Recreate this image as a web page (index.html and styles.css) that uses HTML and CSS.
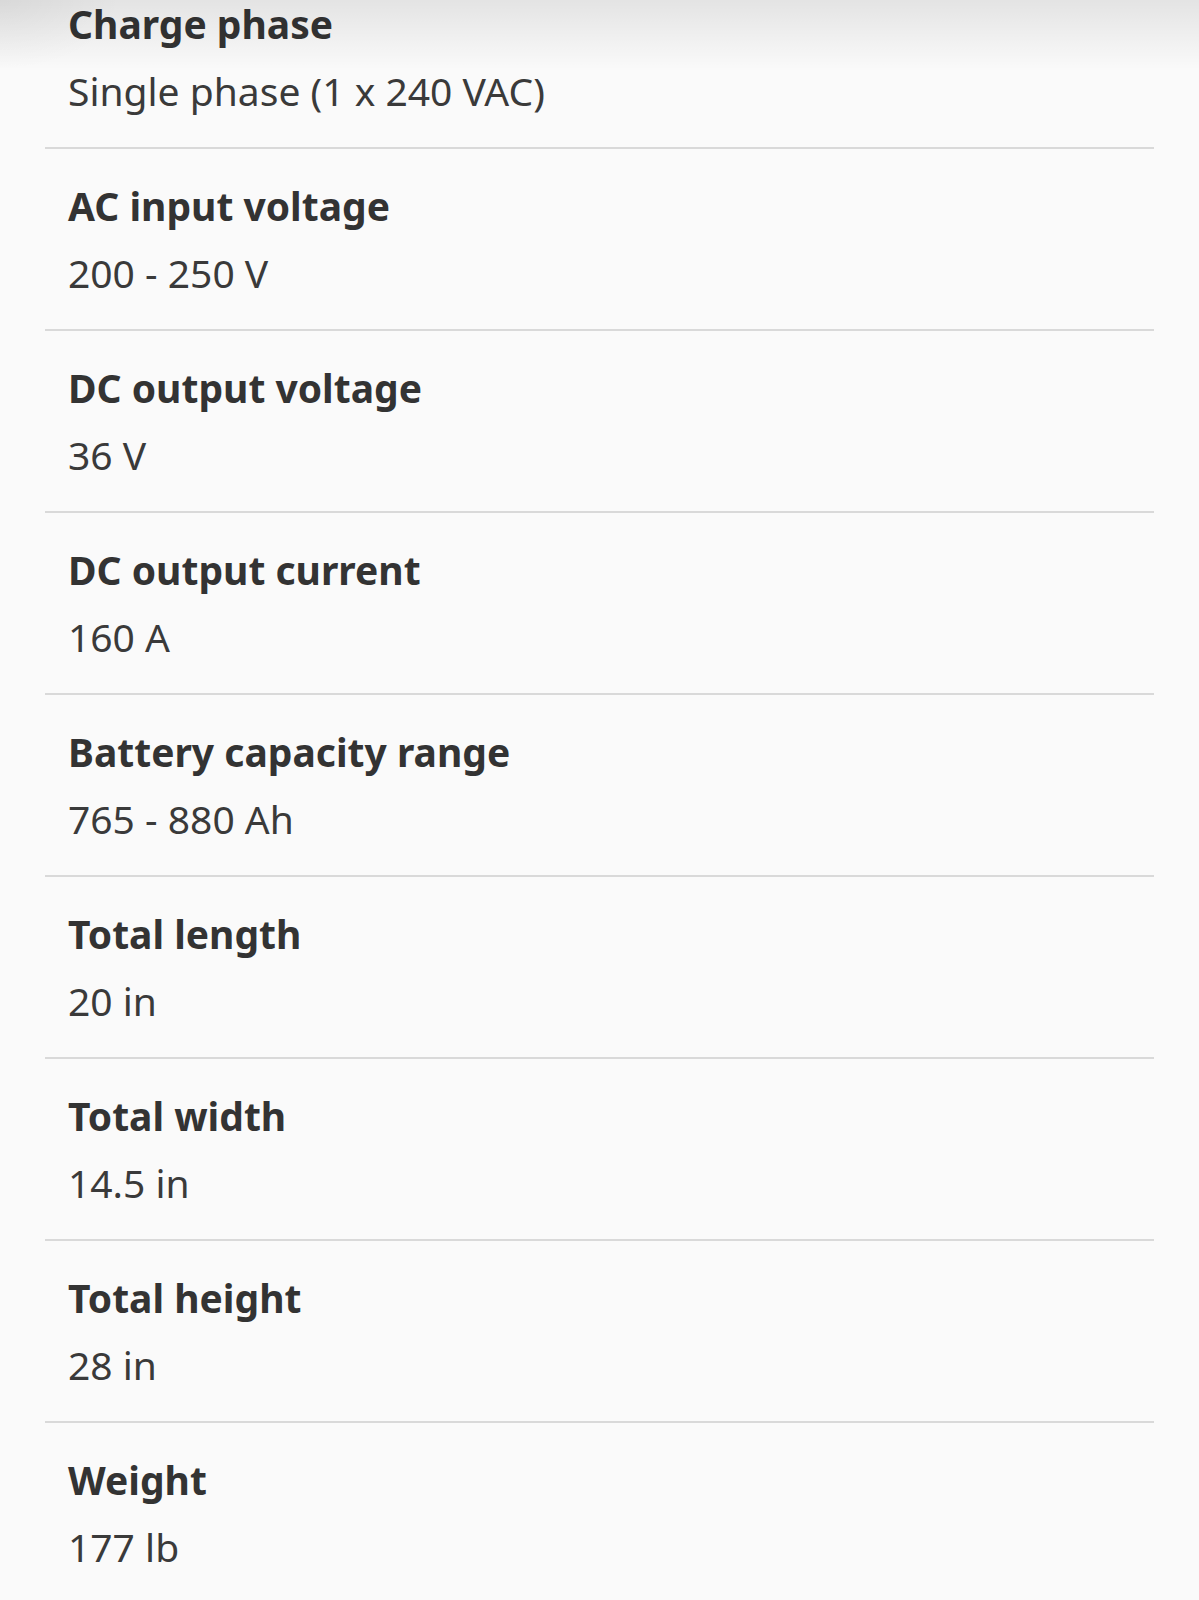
FILE: index.html
```html
<!DOCTYPE html>
<html lang="en">
<head>
    <meta charset="UTF-8">
    <meta name="viewport" content="width=device-width, initial-scale=1.0">
    <title>Specifications</title>
    <link rel="stylesheet" href="styles.css">
</head>
<body>

    <div class="top-shade"></div>

    <ul class="specs">
        <li class="spec">
            <span class="spec-name">Charge phase</span>
            <span class="spec-value">Single phase (1 x 240 VAC)</span>
        </li>
        <li class="spec">
            <span class="spec-name">AC input voltage</span>
            <span class="spec-value">200 - 250 V</span>
        </li>
        <li class="spec">
            <span class="spec-name">DC output voltage</span>
            <span class="spec-value">36 V</span>
        </li>
        <li class="spec">
            <span class="spec-name">DC output current</span>
            <span class="spec-value">160 A</span>
        </li>
        <li class="spec">
            <span class="spec-name">Battery capacity range</span>
            <span class="spec-value">765 - 880 Ah</span>
        </li>
        <li class="spec">
            <span class="spec-name">Total length</span>
            <span class="spec-value">20 in</span>
        </li>
        <li class="spec">
            <span class="spec-name">Total width</span>
            <span class="spec-value">14.5 in</span>
        </li>
        <li class="spec">
            <span class="spec-name">Total height</span>
            <span class="spec-value">28 in</span>
        </li>
        <li class="spec">
            <span class="spec-name">Weight</span>
            <span class="spec-value">177 lb</span>
        </li>
    </ul>

</body>
</html>
```

FILE: styles.css
```css
body {
    font-family: "Noto Sans", "Open Sans", sans-serif;
    background-color: #fafafa;
    color: #333;
    margin: 0;
    height: 1600px;
    overflow: hidden;
}

/* shadow of the sticky bar above, cut off by the screenshot */
.top-shade {
    position: absolute;
    top: 0;
    left: 0;
    right: 0;
    height: 70px;
    background:
        radial-gradient(ellipse 120px 70px at 0 0, rgba(0,0,0,0.05), rgba(0,0,0,0)),
        linear-gradient(to bottom, rgba(0,0,0,0.09), rgba(0,0,0,0));
}

.specs {
    list-style: none;
    margin: -33px 0 0 45px;
    padding: 0;
    width: 1109px;
}

.spec {
    display: flex;
    flex-direction: column;
    gap: 15px;
    padding: 31px 0 30px 23px;
    border-bottom: 2px solid #d9d9d9;
}

.spec-name {
    font-weight: bold;
    font-size: 39px;
    line-height: 52px;
}

.spec-value {
    font-size: 39px;
    line-height: 52px;
    color: #3a3a3a;
}
```
